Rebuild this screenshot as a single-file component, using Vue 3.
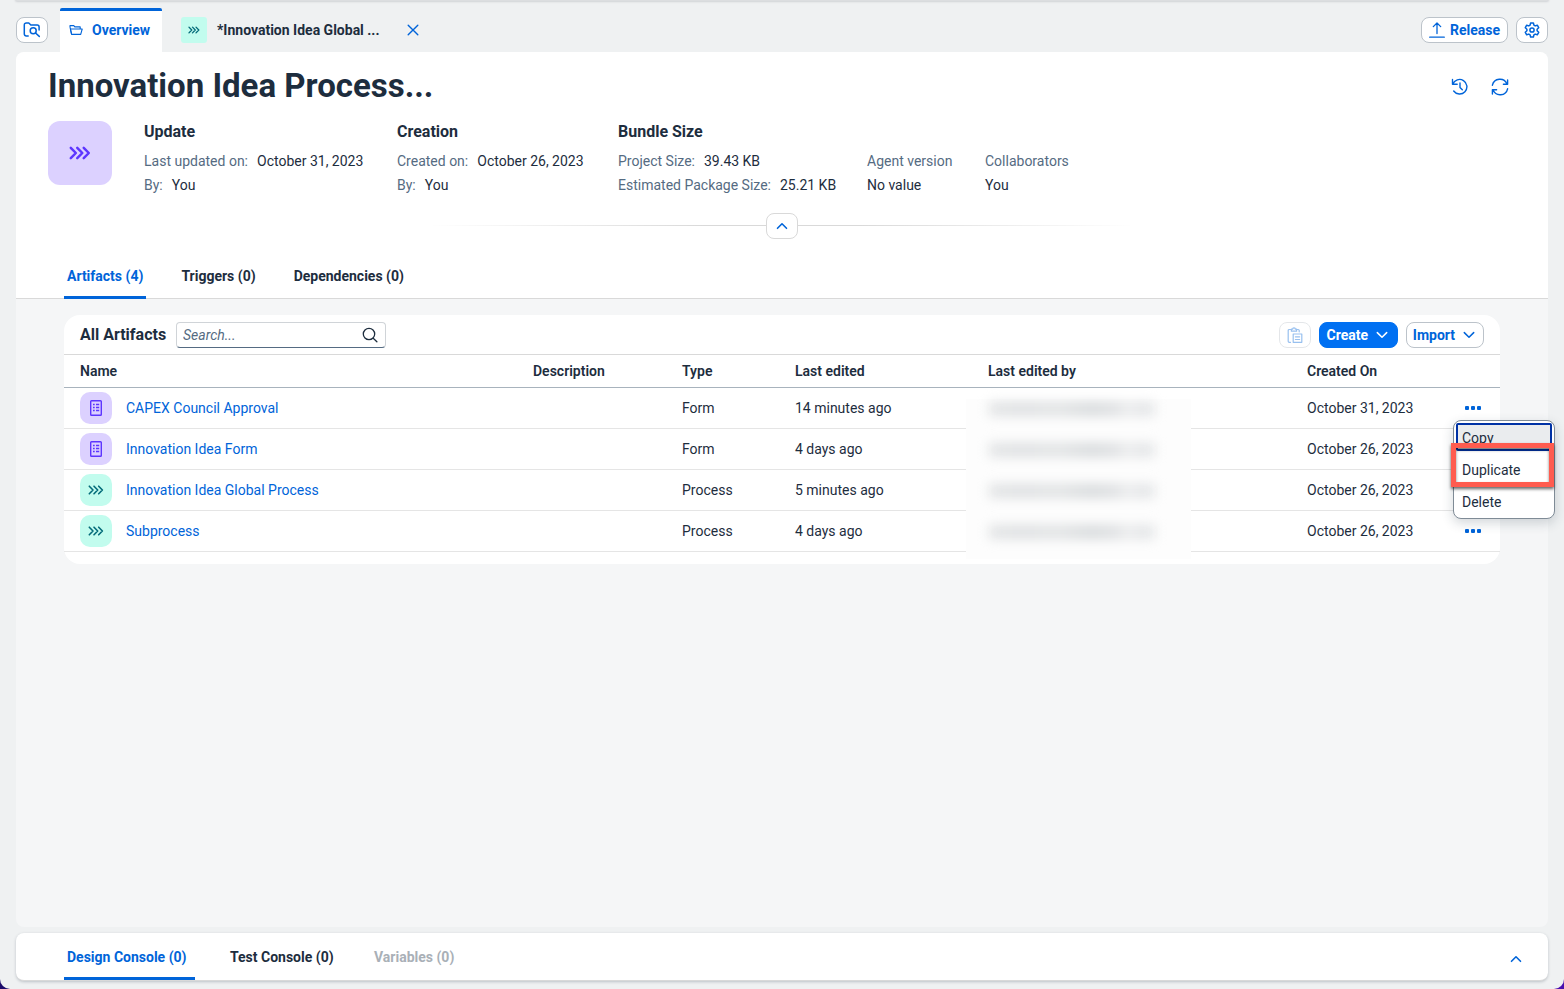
<script setup>
import { ref } from 'vue'

const search = ref('')

const groups = [
  { cls: 'g-update', title: 'Update', rows: [['Last updated on:', 'October 31, 2023'], ['By:', 'You']] },
  { cls: 'g-creation', title: 'Creation', rows: [['Created on:', 'October 26, 2023'], ['By:', 'You']] },
  { cls: 'g-size', title: 'Bundle Size', rows: [['Project Size:', '39.43 KB'], ['Estimated Package Size:', '25.21 KB']] },
]

const extras = [
  { label: 'Agent version', value: 'No value' },
  { label: 'Collaborators', value: 'You' },
]

const tabs = [
  { label: 'Artifacts (4)', active: true },
  { label: 'Triggers (0)' },
  { label: 'Dependencies (0)' },
]

const consoleTabs = [
  { label: 'Design Console (0)', active: true },
  { label: 'Test Console (0)' },
  { label: 'Variables (0)', disabled: true },
]

const artifacts = [
  { name: 'CAPEX Council Approval', kind: 'form', type: 'Form', edited: '14 minutes ago', created: 'October 31, 2023' },
  { name: 'Innovation Idea Form', kind: 'form', type: 'Form', edited: '4 days ago', created: 'October 26, 2023' },
  { name: 'Innovation Idea Global Process', kind: 'process', type: 'Process', edited: '5 minutes ago', created: 'October 26, 2023' },
  { name: 'Subprocess', kind: 'process', type: 'Process', edited: '4 days ago', created: 'October 26, 2023' },
]
</script>

<template>
  <div class="shell">
    <div class="topbar"></div>

    <header class="tabbar">
      <button class="btn icon-btn" aria-label="Browse project">
        <svg width="18" height="16" viewBox="0 0 18 16" fill="none" stroke="currentColor" stroke-width="1.5" stroke-linecap="round" stroke-linejoin="round">
          <path d="M5.2 14H3.2A1.9 1.9 0 0 1 1.3 12.1V2.9A1.9 1.9 0 0 1 3.2 1h2.6l2 2h6.4a1.9 1.9 0 0 1 1.9 1.9V8" />
          <circle cx="10.2" cy="8.7" r="3" />
          <path d="M12.5 11l3.8 3.4" />
        </svg>
      </button>
      <nav class="files">
        <button class="file active">
          <svg width="14" height="12" viewBox="0 0 14 12" fill="none" stroke="currentColor" stroke-width="1.1" stroke-linejoin="round">
            <path d="M2.6 10.4L1 3V1.6h3.8l1 1.3h5.4v2" />
            <path d="M2.6 10.4L1.4 5h11.8l-1.5 5.4z" />
          </svg>
          <span>Overview</span>
        </button>
        <div class="file">
          <span class="tile small process">
            <svg width="12" height="8" viewBox="0 0 16 10" fill="none" stroke="currentColor" stroke-width="1.8" stroke-linecap="round" stroke-linejoin="round"><path d="M1.3 1.2L5 5 1.3 8.8M6 1.2L9.7 5 6 8.8M10.7 1.2L14.4 5l-3.7 3.8" /></svg>
          </span>
          <span class="file-name">*Innovation Idea Global ...</span>
          <button class="plain close" aria-label="Close tab">
            <svg width="12" height="12" viewBox="0 0 12 12" fill="none" stroke="currentColor" stroke-width="1.4" stroke-linecap="round"><path d="M1.2 1.2l9.6 9.6M10.8 1.2L1.2 10.8" /></svg>
          </button>
        </div>
      </nav>
      <div class="actions">
        <button class="btn release">
          <svg width="16" height="16" viewBox="0 0 16 16" fill="none" stroke="currentColor" stroke-width="1.3" stroke-linecap="round" stroke-linejoin="round"><path d="M8 11.5V1.2M4.3 4.6L8 1l3.7 3.6M.7 15.2h14.6" /></svg>
          <span>Release</span>
        </button>
        <button class="btn icon-btn" aria-label="Settings">
          <svg width="16" height="16" viewBox="0 0 16 16" fill="none" stroke="currentColor" stroke-width="1.5" stroke-linejoin="round">
            <path d="M6.6 1h2.8l.5 2.1 1.3.8 2.1-.7 1.4 2.5-1.6 1.5v1.6l1.6 1.5-1.4 2.5-2.1-.7-1.3.8-.5 2.1H6.6l-.5-2.1-1.3-.8-2.1.7-1.4-2.5 1.6-1.5V7.2L1.300 5.700l1.400-2.500 2.100.7 1.300-.8z" />
            <circle cx="8" cy="8" r="2.100" />
          </svg>
        </button>
      </div>
    </header>

    <main class="page">
      <section class="head">
        <div class="title-row">
          <h1>Innovation Idea Process...</h1>
          <div class="title-actions">
            <button class="plain" aria-label="History">
              <svg width="18" height="18" viewBox="0 0 18 18" fill="none" stroke="currentColor" stroke-width="1.400" stroke-linecap="round" stroke-linejoin="round"><path d="M1.500 1.500v4.700h4.700M1.800 6.100A7.300 7.300 0 1 1 2.700 13M9 5v4.500l2.300 2.300" /></svg>
            </button>
            <button class="plain" aria-label="Refresh">
              <svg width="18" height="18" viewBox="0 0 18 18" fill="none" stroke="currentColor" stroke-width="1.400" stroke-linecap="round" stroke-linejoin="round"><path d="M1.400 7.200A7.700 7.700 0 0 1 16 5.900M16.600 2v4.200h-4.200M16.600 10.800A7.700 7.700 0 0 1 2 12.100M1.400 16v-4.200h4.200" /></svg>
            </button>
          </div>
        </div>
        <div class="summary">
          <span class="tile large project">
            <svg width="22" height="14" viewBox="0 0 16 10" fill="none" stroke="currentColor" stroke-width="1.800" stroke-linecap="round" stroke-linejoin="round"><path d="M1.300 1.200L5 5 1.300 8.800M6 1.200L9.700 5 6 8.800M10.700 1.200L14.400 5l-3.700 3.800" /></svg>
          </span>
          <div v-for="g in groups" :key="g.title" class="group" :class="g.cls">
            <h2>{{ g.title }}</h2>
            <p v-for="r in g.rows" :key="r[0]"><span class="label">{{ r[0] }}</span><span>{{ r[1] }}</span></p>
          </div>
          <div v-for="e in extras" :key="e.label" class="group extra">
            <p class="label">{{ e.label }}</p>
            <p>{{ e.value }}</p>
          </div>
        </div>
        <div class="collapse">
          <button class="btn icon-btn" aria-label="Collapse header">
            <svg width="12" height="8" viewBox="0 0 12 8" fill="none" stroke="currentColor" stroke-width="1.600" stroke-linecap="round" stroke-linejoin="round"><path d="M1.500 6.300L6 1.800l4.500 4.500" /></svg>
          </button>
        </div>
        <nav class="tabs">
          <button v-for="t in tabs" :key="t.label" class="tab" :class="{ active: t.active }">{{ t.label }}</button>
        </nav>
      </section>

      <section class="card">
        <div class="toolbar">
          <h2>All Artifacts</h2>
          <div class="search">
            <input v-model="search" type="text" placeholder="Search..." aria-label="Search artifacts" />
            <svg width="16" height="16" viewBox="0 0 16 16" fill="none" stroke="currentColor" stroke-width="1.300" stroke-linecap="round"><circle cx="7" cy="7" r="5.700" /><path d="M11.200 11.200l3.700 3.600" /></svg>
          </div>
          <div class="tools">
            <button class="btn icon-btn" disabled aria-label="Paste">
              <svg width="16" height="16" viewBox="0 0 16 16" fill="none" stroke="currentColor" stroke-width="1.200" stroke-linejoin="round" stroke-linecap="round">
                <path d="M3.500 15.300H2.200A1 1 0 0 1 1.200 14.300V3.500A1 1 0 0 1 2.200 2.500h1.800M9.800 2.500h1.400A1 1 0 0 1 12.200 3.500v1.300" />
                <path d="M4.400 4.200V2.200h1.200a1.400 1.400 0 0 1 2.800 0h1.200v2z" />
                <path d="M6.200 7h8.600v8.300H6.200zM8.400 9.800h4.200M8.400 12.500h4.200" />
              </svg>
            </button>
            <button class="btn split primary">
              <span>Create</span>
              <svg width="12" height="8" viewBox="0 0 12 8" fill="none" stroke="currentColor" stroke-width="1.500" stroke-linecap="round" stroke-linejoin="round"><path d="M1.300 1.600L6 6.300l4.700-4.700" /></svg>
            </button>
            <button class="btn split">
              <span>Import</span>
              <svg width="12" height="8" viewBox="0 0 12 8" fill="none" stroke="currentColor" stroke-width="1.500" stroke-linecap="round" stroke-linejoin="round"><path d="M1.300 1.600L6 6.300l4.700-4.700" /></svg>
            </button>
          </div>
        </div>

        <table>
          <colgroup>
            <col /><col class="c-desc" /><col class="c-type" /><col class="c-edited" /><col class="c-by" /><col class="c-created" /><col class="c-menu" />
          </colgroup>
          <thead>
            <tr>
              <th>Name</th><th>Description</th><th>Type</th><th>Last edited</th><th>Last edited by</th><th>Created On</th><th></th>
            </tr>
          </thead>
          <tbody>
            <tr v-for="(a, i) in artifacts" :key="a.name">
              <td>
                <div class="name">
                  <span class="tile medium" :class="a.kind">
                    <svg v-if="a.kind === 'form'" width="12" height="16" viewBox="0 0 12 16" fill="none" stroke="currentColor" stroke-width="1.400">
                      <rect x=".7" y=".7" width="10.600" height="14.600" rx=".8" />
                      <path d="M3 4.500h1.700M6 4.500h3.200M3 7.500h1.700M6 7.500h3.200M3 10.500h1.700M6 10.500h3.200" />
                    </svg>
                    <svg v-else width="16" height="10" viewBox="0 0 16 10" fill="none" stroke="currentColor" stroke-width="1.600" stroke-linecap="round" stroke-linejoin="round"><path d="M1.300 1.200L5 5 1.300 8.800M6 1.200L9.700 5 6 8.800M10.700 1.200L14.400 5l-3.700 3.800" /></svg>
                  </span>
                  <a href="#">{{ a.name }}</a>
                </div>
              </td>
              <td></td>
              <td>{{ a.type }}</td>
              <td>{{ a.edited }}</td>
              <td class="by">
                <div v-if="i === 0" class="redaction">
                  <span v-for="n in 4" :key="n" class="smudge"></span>
                </div>
              </td>
              <td>{{ a.created }}</td>
              <td class="more">
                <button class="plain dots" aria-label="More actions"><i></i><i></i><i></i></button>
                <div v-if="i === 0" class="menu">
                  <button class="item focused">Copy</button>
                  <button class="item">Duplicate</button>
                  <button class="item">Delete</button>
                  <div class="marker"></div>
                </div>
              </td>
            </tr>
          </tbody>
        </table>
      </section>
    </main>

    <footer class="console">
      <nav class="tabs">
        <button v-for="t in consoleTabs" :key="t.label" class="tab" :class="{ active: t.active }" :disabled="t.disabled">{{ t.label }}</button>
      </nav>
      <button class="plain expand" aria-label="Expand console">
        <svg width="12" height="8" viewBox="0 0 12 8" fill="none" stroke="currentColor" stroke-width="1.600" stroke-linecap="round" stroke-linejoin="round"><path d="M1.500 6.300L6 1.800l4.500 4.500" /></svg>
      </button>
    </footer>
  </div>
</template>

<style>
body {
  margin: 0;
  background: linear-gradient(90deg, #1d0c6b, #4a0fae);
}
</style>

<style scoped>
* {
  box-sizing: border-box;
}
.shell {
  min-height: 100vh;
  display: flex;
  flex-direction: column;
  padding: 0 16px 8px;
  background: #eff1f2;
  border-radius: 0 0 10px 10px;
  font-family: Roboto, "Liberation Sans", sans-serif;
  font-size: 14px;
  line-height: 20px;
  color: #1d2d3e;
}
h1, h2, p {
  margin: 0;
}
button, input {
  font: inherit;
  color: inherit;
}
svg {
  display: block;
  flex: none;
}
.topbar {
  height: 1px;
  background: #dcdee0;
  border-radius: 0 0 8px 8px;
  box-shadow: 0 0 2px 1px #d0d3d6;
}
.btn {
  height: 26px;
  display: flex;
  align-items: center;
  justify-content: center;
  padding: 0 7px;
  border: 1px solid #bcc3ca;
  border-radius: 8px;
  background: #fff;
  color: #0064d9;
  font-weight: 700;
}
.icon-btn {
  width: 32px;
  padding: 0;
}
.plain {
  display: flex;
  align-items: center;
  justify-content: center;
  padding: 0;
  border: 0;
  background: none;
  color: #0064d9;
}
.tabbar {
  height: 51px;
  display: flex;
  align-items: center;
  padding-top: 7px;
}
.files {
  display: flex;
  align-self: stretch;
  margin-left: 12px;
}
.file {
  display: flex;
  align-items: center;
  gap: 10px;
  padding: 0 19px;
  font-weight: 700;
}
.file.active {
  width: 102px;
  gap: 9px;
  padding: 0 0 3px 9px;
  border: 0;
  border-top: 3px solid #0064d9;
  border-radius: 2px 2px 0 0;
  background: #fff;
  color: #0064d9;
}
.file-name {
  min-width: 172px;
}
.close {
  margin-left: 8px;
}
.actions {
  display: flex;
  gap: 8px;
  margin-left: auto;
}
.release {
  gap: 5px;
}
.tile {
  display: flex;
  align-items: center;
  justify-content: center;
  flex: none;
}
.tile.small {
  width: 26px;
  height: 26px;
  border-radius: 3px;
}
.tile.medium {
  width: 32px;
  height: 32px;
  border-radius: 10px;
}
.tile.large {
  width: 64px;
  height: 64px;
  border-radius: 12px;
}
.form, .project {
  background: #dcd1ff;
  color: #5d36ff;
}
.process {
  background: #c2fcee;
  color: #046c7a;
}
.page {
  flex: 1;
  border-radius: 8px;
  background: #f5f6f7;
}
.head {
  background: #fff;
  border-radius: 8px 8px 0 0;
  border-bottom: 1px solid #d9d9d9;
}
.title-row {
  display: flex;
  justify-content: space-between;
  align-items: center;
  padding: 14px 39px 0 32px;
}
h1 {
  font-size: 33px;
  line-height: 40px;
  font-weight: 700;
}
.title-actions {
  display: flex;
  gap: 22px;
  padding-top: 2px;
}
.summary {
  display: flex;
  gap: 32px;
  padding: 15px 32px 0;
}
.group p {
  line-height: 24px;
  white-space: nowrap;
}
.group h2 {
  font-size: 16px;
  line-height: 22px;
  margin-bottom: 6px;
}
.label {
  color: #556b82;
}
.group span + span {
  margin-left: 9px;
}
.g-update {
  width: 221px;
}
.g-creation {
  width: 189px;
}
.g-size {
  width: 217px;
}
.extra {
  padding-top: 28px;
  min-width: 86px;
}
.collapse {
  display: flex;
  justify-content: center;
  margin-top: 16px;
  background: linear-gradient(90deg, transparent 27%, #d9d9d9 45%, #d9d9d9 55%, transparent 73%) 0 12px / 100% 1px no-repeat;
}
.collapse .btn {
  border-color: #d9d9d9;
}
.tabs {
  display: flex;
  gap: 32px;
  padding-left: 48px;
}
.tab {
  height: 45px;
  padding: 2px 3px 0;
  border: 0;
  border-bottom: 3px solid transparent;
  background: none;
  font-weight: 700;
  text-align: left;
}
.head .tabs {
  padding-top: 15px;
  margin-bottom: -1px;
}
.tab.active {
  color: #0064d9;
  border-color: #0064d9;
}
.tab:disabled {
  color: #a9b0b7;
}
.card {
  margin: 16px 48px 0;
  padding-bottom: 12px;
  border-radius: 16px;
  background: #fff;
}
.toolbar {
  height: 40px;
  display: flex;
  align-items: center;
  gap: 8px;
  padding: 0 16px;
  border-bottom: 1px solid #d9d9d9;
}
.toolbar h2 {
  min-width: 88px;
  font-size: 16px;
}
.search {
  width: 210px;
  height: 26px;
  display: flex;
  align-items: center;
  padding: 0 7px 0 6px;
  border: 1px solid #d0d4d8;
  border-bottom-color: #556b82;
  border-radius: 4px;
  background: #fff;
}
.search input {
  flex: 1;
  min-width: 0;
  padding: 0;
  border: 0;
  outline: 0;
  background: none;
}
.search input::placeholder {
  color: #556b82;
  font-style: italic;
  opacity: 1;
}
.tools {
  display: flex;
  gap: 8px;
  margin-left: auto;
}
.tools .btn:disabled {
  opacity: 0.4;
}
.split {
  gap: 8px;
  min-width: 78px;
  padding: 0 8px 0 6px;
}
.primary {
  min-width: 79px;
  background: #0070f2;
  border-color: #0070f2;
  color: #fff;
}
table {
  width: 100%;
  table-layout: fixed;
  border-collapse: separate;
  border-spacing: 0;
}
.c-desc { width: 149px; }
.c-type { width: 113px; }
.c-edited { width: 193px; }
.c-by { width: 319px; }
.c-created { width: 150px; }
.c-menu { width: 51px; }
th {
  height: 33px;
  padding: 0 8px;
  text-align: left;
  font-weight: 600;
  border-bottom: 1px solid #a8b3bd;
}
td {
  height: 41px;
  padding: 0 8px;
  border-bottom: 1px solid #e5e5e5;
}
th:first-child, td:first-child {
  padding-left: 16px;
}
.name {
  display: flex;
  align-items: center;
  gap: 14px;
}
a {
  color: #0064d9;
  text-decoration: none;
}
.by, .more {
  position: relative;
}
.redaction {
  position: absolute;
  z-index: 1;
  left: -14px;
  top: 11px;
  width: 225px;
  height: 160px;
  display: flex;
  flex-direction: column;
  gap: 27px;
  padding: 3px 0 0 23px;
  background: #fdfdfd;
}
.smudge {
  width: 166px;
  height: 14px;
  flex: none;
  background: linear-gradient(90deg, #e2e4e5, #dddfe1 20%, #e1e3e4 40%, #d7dadc 62%, #dddfe1 76%, #ebeced 84%, #e2e4e6 92%, #e6e8e9);
  filter: blur(6px);
}
.dots {
  gap: 2px;
  height: 20px;
}
.dots i {
  width: 4px;
  height: 4px;
  border-radius: 1px;
  background: #0064d9;
}
.more {
  padding-left: 16px;
}
.menu {
  position: absolute;
  z-index: 2;
  top: 32px;
  right: -55px;
  width: 102px;
  padding-top: 1px;
  border: 1px solid #7f8b96;
  border-radius: 8px;
  background: #fff;
  box-shadow: 0 4px 12px rgba(34, 53, 72, 0.2);
}
.item {
  display: block;
  width: 100%;
  height: 32px;
  padding: 0 8px;
  border: 0;
  border-radius: 8px;
  background: none;
  text-align: left;
}
.item.focused {
  width: 96px;
  height: 28px;
  margin: 1px 2px 3px;
  padding: 2px 4px 0;
  border: 2px solid #0032a5;
  border-radius: 2px;
  background: #eaecee;
}
.marker {
  position: absolute;
  left: -3px;
  top: 22px;
  width: 103px;
  height: 44px;
  border: 5px solid #ff5c4f;
  box-shadow: 0 2px 3px rgba(0, 0, 0, 0.6), inset 0 2px 3px rgba(0, 0, 0, 0.5);
}
.console {
  display: flex;
  justify-content: space-between;
  margin-top: 6px;
  border-radius: 8px;
  background: #fff;
  border-bottom: 1px solid #d9d9d9;
  box-shadow: 0 1px 3px rgba(34, 53, 72, 0.25);
}
.console .tab {
  height: 47px;
  padding-top: 4px;
}
.console .tab:nth-child(1) {
  min-width: 131px;
}
.console .tab:nth-child(2) {
  min-width: 112px;
}
.expand {
  width: 32px;
  margin-right: 16px;
  padding-top: 4px;
}
</style>
